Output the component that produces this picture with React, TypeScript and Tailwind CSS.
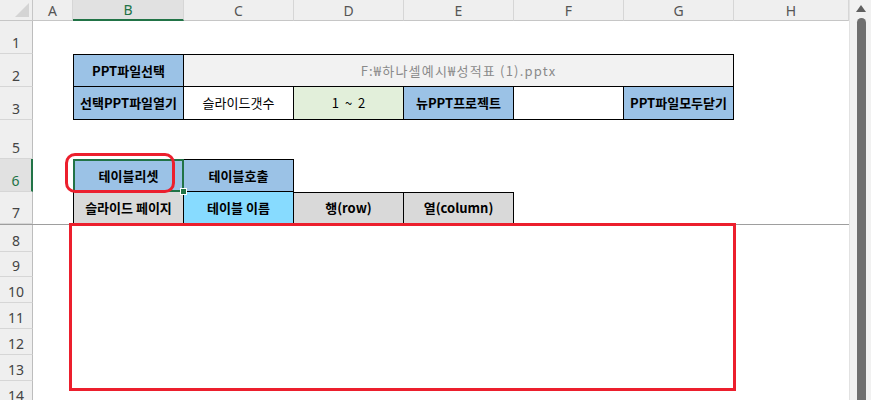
import React from "react"

const KR = "font-['Noto_Sans_CJK_KR','Noto_Sans',sans-serif]"

function RowHead({ n, active, className = "" }: { n?: number; active?: boolean; className?: string }) {
  return (
    <div
      className={`w-[33px] shrink-0 flex items-end justify-center pb-[2px] border-b border-[#d6d6d6] font-['Noto_Sans',sans-serif] text-[14px] leading-[16px] ${
        active
          ? "bg-[#e1e1e1] text-[#217346] border-r-2 border-r-[#217346]"
          : "bg-[#efefef] text-[#444] border-r border-r-[#bdbdbd]"
      } ${className}`}
    >
      {n}
    </div>
  )
}

function Cell({ className = "", children }: { className?: string; children?: React.ReactNode }) {
  return (
    <div className={`shrink-0 flex items-center justify-center border-black text-[13px] text-black ${KR} ${className}`}>
      {children}
    </div>
  )
}

const colHeads: { l: string; w: string }[] = [
  { l: "A", w: "w-[40px]" },
  { l: "B", w: "w-[111px]" },
  { l: "C", w: "w-[110px]" },
  { l: "D", w: "w-[110px]" },
  { l: "E", w: "w-[110px]" },
  { l: "F", w: "w-[110px]" },
  { l: "G", w: "w-[110px]" },
  { l: "H", w: "w-[115px]" },
]

const lowerRows = [
  { n: 8, h: "h-[27px]" },
  { n: 9, h: "h-[25px]" },
  { n: 10, h: "h-[26px]" },
  { n: 11, h: "h-[26px]" },
  { n: 12, h: "h-[26px]" },
  { n: 13, h: "h-[26px]" },
  { n: 14, h: "h-[26px]" },
]

export default function App() {
  return (
    <div className="relative flex w-[871px] h-[400px] overflow-hidden bg-white">
      <div className="flex flex-col w-[849px] shrink-0">
        {/* column header */}
        <div className="flex h-[21px] shrink-0">
          <div className="w-[33px] shrink-0 bg-[#efefef] border-r border-b border-[#c6c6c6] flex items-end justify-end pr-[3px] pb-[3px]">
            <svg width="14" height="14" viewBox="0 0 14 14">
              <polygon points="14,0 14,14 0,14" fill="#d4d4d4" />
            </svg>
          </div>
          {colHeads.map((c) =>
            c.l === "B" ? (
              <div
                key={c.l}
                className={`${c.w} shrink-0 bg-[#e1e1e1] border-r border-[#d6d6d6] border-b-2 border-b-[#217346] flex items-center justify-center text-[14px] text-[#217346] font-['Noto_Sans',sans-serif]`}
              >
                {c.l}
              </div>
            ) : (
              <div
                key={c.l}
                className={`${c.w} shrink-0 bg-[#efefef] border-r border-[#d6d6d6] border-b border-b-[#c6c6c6] flex items-center justify-center text-[14px] text-[#555] font-['Noto_Sans',sans-serif]`}
              >
                {c.l}
              </div>
            )
          )}
        </div>

        {/* row 1 */}
        <div className="flex h-[33px] shrink-0">
          <RowHead n={1} />
        </div>

        {/* row 2 */}
        <div className="flex h-[33px] shrink-0">
          <RowHead n={2} />
          <div className="w-[40px] shrink-0" />
          <Cell className="w-[111px] border bg-[#9bc2e6] font-bold">PPT파일선택</Cell>
          <Cell className="w-[550px] border-t border-r border-b bg-[#f2f2f2] !text-[#8a8a8a] tracking-[1.2px]">
            F:₩하나셀예시₩성적표 (1).pptx
          </Cell>
        </div>

        {/* row 3 */}
        <div className="flex h-[33px] shrink-0">
          <RowHead n={3} />
          <div className="w-[40px] shrink-0" />
          <Cell className="w-[111px] border-l border-r border-b bg-[#9bc2e6] font-bold">선택PPT파일열기</Cell>
          <Cell className="w-[110px] border-r border-b bg-white">슬라이드갯수</Cell>
          <Cell className="w-[110px] border-r border-b bg-[#e2efda] whitespace-pre">1  ~  2</Cell>
          <Cell className="w-[110px] border-r border-b bg-[#9bc2e6] font-bold">뉴PPT프로젝트</Cell>
          <Cell className="w-[110px] border-r border-b bg-white" />
          <Cell className="w-[110px] border-r border-b bg-[#9bc2e6] font-bold">PPT파일모두닫기</Cell>
        </div>

        {/* row 4 hidden */}
        <div className="flex h-[2px] shrink-0">
          <RowHead />
        </div>

        {/* row 5 */}
        <div className="flex h-[37px] shrink-0">
          <RowHead n={5} />
        </div>

        {/* row 6 */}
        <div className="flex h-[33px] shrink-0">
          <RowHead n={6} active />
          <div className="w-[40px] shrink-0" />
          <Cell className="relative w-[111px] border bg-[#9bc2e6] font-bold">
            테이블리셋
            <div className="absolute -left-[1px] -top-[1px] -right-[1px] -bottom-[1px] border-2 border-[#217346]" />
            <div className="absolute -right-[4px] -bottom-[4px] w-[7px] h-[7px] bg-[#217346] border border-white" />
          </Cell>
          <Cell className="w-[110px] border-t border-r border-b bg-[#9bc2e6] font-bold">테이블호출</Cell>
        </div>

        {/* row 7 */}
        <div className="flex h-[32px] shrink-0">
          <RowHead n={7} />
          <div className="w-[40px] shrink-0" />
          <Cell className="w-[111px] border-l border-r border-b bg-[#d9d9d9] font-bold">슬라이드 페이지</Cell>
          <Cell className="w-[110px] border-r border-b bg-[#87dbff] font-bold">테이블 이름</Cell>
          <Cell className="w-[110px] border-t border-r border-b bg-[#d9d9d9] font-bold">행(row)</Cell>
          <Cell className="w-[110px] border-t border-r border-b bg-[#d9d9d9] font-bold">열(column)</Cell>
        </div>

        {/* freeze pane line */}
        <div className="h-[1px] shrink-0 bg-[#9e9e9e]" />

        {lowerRows.map((r) => (
          <div key={r.n} className={`flex ${r.h} shrink-0`}>
            <RowHead n={r.n} />
          </div>
        ))}
      </div>

      {/* vertical scrollbar */}
      <div className="w-[22px] shrink-0 bg-[#f1f1f1] border-l border-[#e2e2e2] flex flex-col items-center pt-[5px]">
        <svg width="10" height="7" viewBox="0 0 10 7" className="ml-[1px]">
          <polygon points="5,0 10,7 0,7" fill="#606060" />
        </svg>
        <div className="mt-[6px] w-[9px] flex-1 rounded-t-full bg-[#6f6f6f] ml-[1px]" />
      </div>

      {/* annotation shapes */}
      <div className="absolute left-[65px] top-[153px] w-[110px] h-[40px] rounded-[10px] border-[3px] border-[#ec1f2d]" />
      <div className="absolute left-[69px] top-[223px] w-[667px] h-[168px] border-[3px] border-[#ec1f2d]" />
    </div>
  )
}
